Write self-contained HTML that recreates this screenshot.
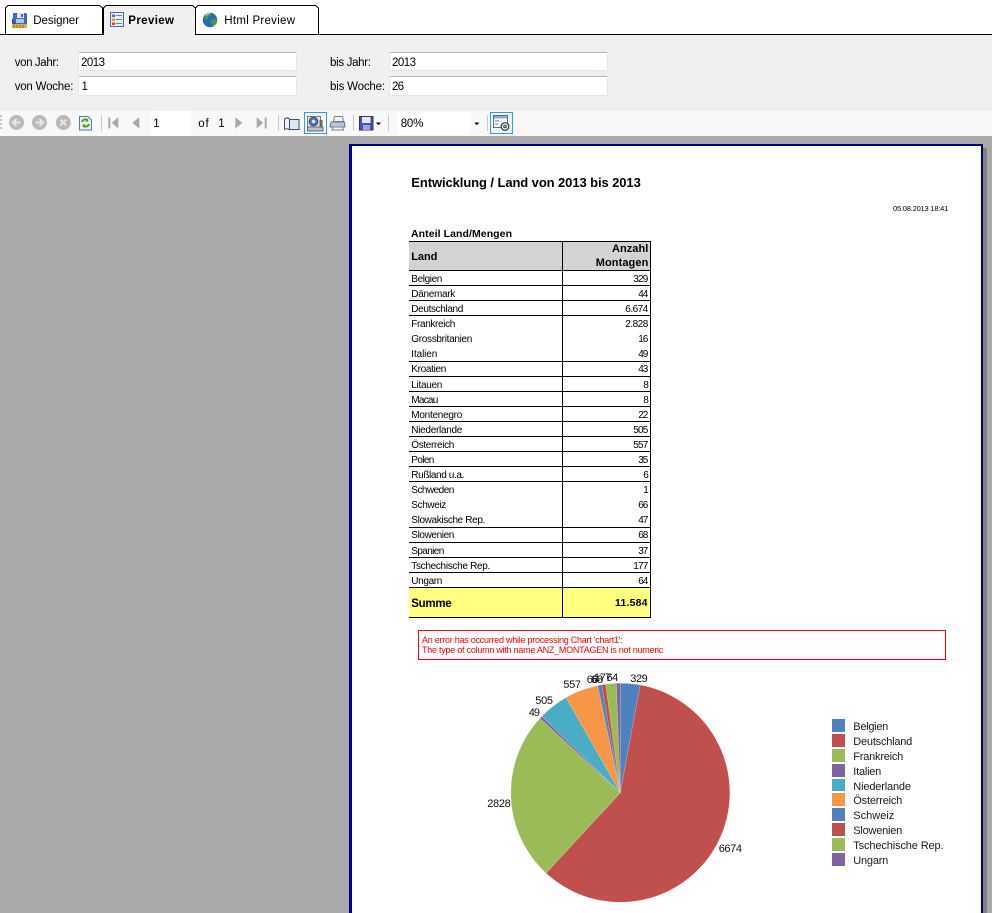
<!DOCTYPE html>
<html lang="de">
<head>
<meta charset="utf-8">
<title>Report Preview</title>
<style>
html,body{margin:0;padding:0;background:#a9a9a9;width:992px;height:913px;overflow:hidden}
svg{display:block;position:absolute;left:0;top:0}
text{font-family:"Liberation Sans",sans-serif;fill:#000;white-space:pre}
.ui{font-size:11.5px}
.c{font-size:10px}
.c text{fill:#000}
.lg{font-size:11px}
.lg text{fill:#1a1a1a}
.pl{font-size:11px}
.pl text{fill:#111}
.err{font-size:9px;fill:#f00}
.b{font-weight:bold}
.tl{fill:#000}
</style>
</head>
<body>
<svg width="992" height="913" viewBox="0 0 992 913" xmlns="http://www.w3.org/2000/svg">
<!-- backgrounds -->
<rect width="992" height="35" fill="#fff"/>
<rect y="35" width="992" height="76" fill="#f0f0f0"/>
<rect y="111" width="992" height="25" fill="#f8f8f8"/>
<rect y="136" width="992" height="777" fill="#a9a9a9"/>

<!-- tabs -->
<g fill="#fff" stroke="#000" stroke-width="1">
<path d="M5.5 34.5V8l2.5-2.5H99.5L102.5 8V34.5"/>
<path d="M195.5 34.5V8l2.5-2.5H315.5L318.5 8V34.5"/>
</g>
<rect x="0" y="34" width="992" height="1" fill="#000"/>
<path d="M103.5 35V8L106 5.5H192.5L195.5 8V35" fill="#f0f0f0" stroke="#000"/>
<rect x="104" y="34" width="91" height="2" fill="#f0f0f0"/>
<!-- designer icon -->
<path d="M13 13h13l1 1v10H13z" fill="#3b68c9"/>
<rect x="17" y="13" width="7" height="5" fill="#dbe6f6"/>
<rect x="21" y="14" width="2" height="3" fill="#3b68c9"/>
<rect x="16" y="19" width="8" height="4" fill="#a9c6ee"/>
<path d="M12 18l4 6h-4z" fill="#2a4da8"/>
<path d="M12 24h15v4H12z" fill="#dfb040"/>
<path d="M14 25v3M17 25v3M20 25v3M23 25v3" stroke="#8a6a12"/>
<text x="33.3" y="24" class="ui" textLength="45.7">Designer</text>
<!-- preview icon -->
<rect x="110.5" y="12.5" width="13" height="14" fill="#eaf0f9" stroke="#52688f"/>
<rect x="112" y="14.500" width="3" height="2.500" fill="#3a6fd8"/>
<rect x="112" y="18.500" width="3" height="2.500" fill="#e59420"/>
<rect x="112" y="22.500" width="3" height="2.500" fill="#d8402a"/>
<path d="M116 15.500h6M116 19.500h6M116 23.500h6" stroke="#6a7da0"/>
<text x="128.3" y="24" class="ui b" textLength="45.7">Preview</text>
<!-- globe -->
<circle cx="210" cy="20" r="7.2" fill="#2a69b5"/>
<path d="M204.500 15.500c2-2.300 5-3 6.500-2.500 1 1 0 3-2 3.500-1 1-1 2.500-2 3-1.700 0-3-1.500-2.500-4zM211 20c2-1 5-1.200 6.200 0 0 3-2 5.700-4.200 6.700-1-1-1-3-2-4-.5-1-.5-2 0-2.700z" fill="#3f9a4a"/>
<path d="M206 15.500a6 6 0 0 1 4-2" stroke="#cfe3f6" fill="none"/>
<text x="224.3" y="24" class="ui" textLength="70.7">Html Preview</text>

<!-- form -->
<text x="14.7" y="66" class="ui" textLength="44.3">von Jahr:</text>
<text x="14.7" y="90" class="ui" textLength="58.7">von Woche:</text>
<text x="330" y="66" class="ui" textLength="41">bis Jahr:</text>
<text x="330" y="90" class="ui" textLength="55">bis Woche:</text>
<g fill="#fff" stroke="#e2e5ec">
<rect x="78.5" y="52.5" width="218" height="18" rx="1"/>
<rect x="78.5" y="76.5" width="218" height="19" rx="1"/>
<rect x="389.5" y="52.5" width="218" height="18" rx="1"/>
<rect x="389.5" y="76.5" width="218" height="19" rx="1"/>
</g>
<g stroke="#b0b2ba">
<path d="M79 52.5h217M79 76.5h217M390 52.5h217M390 76.5h217"/>
</g>
<text x="81" y="66" class="ui" textLength="24">2013</text>
<text x="81.5" y="90" class="ui" textLength="5">1</text>
<text x="392" y="66" class="ui" textLength="24">2013</text>
<text x="392" y="90" class="ui" textLength="12">26</text>

<!-- toolbar -->
<g fill="#c4c4c4"><rect x="0" y="115" width="2" height="2"/><rect x="0" y="119" width="2" height="2"/><rect x="0" y="123" width="2" height="2"/><rect x="0" y="127" width="2" height="2"/></g>
<circle cx="16.5" cy="122.5" r="7.5" fill="#bababa"/>
<path d="M20.5 122.5h-7M16.5 119l-3.5 3.500 3.500 3.500" stroke="#e8e8e8" stroke-width="2" fill="none"/>
<circle cx="39.5" cy="122.5" r="7.5" fill="#bababa"/>
<path d="M35.5 122.5h7M39.5 119l3.500 3.500-3.500 3.500" stroke="#e8e8e8" stroke-width="2" fill="none"/>
<circle cx="63.3" cy="122.5" r="7.5" fill="#bababa"/>
<path d="M60.5 119.700l5.600 5.600M66.100 119.700l-5.600 5.600" stroke="#e8e8e8" stroke-width="2"/>
<path d="M79.5 116.500H88l3.500 3.500v10H79.500z" fill="#e6eefa" stroke="#5a79aa"/>
<path d="M82 122a3.500 3.500 0 0 1 6-1.500M89 124a3.500 3.500 0 0 1-6 1.500" stroke="#4a9a06" stroke-width="1.800" fill="none"/>
<path d="M87 118.500l1.500 3-3 .300zM84 127.500l-1.500-3 3-.300z" fill="#4a9a06"/>
<g fill="#c8c8c8"><rect x="101" y="115" width="1" height="16"/><rect x="278" y="115" width="1" height="16"/><rect x="353" y="115" width="1" height="16"/><rect x="388" y="115" width="1" height="16"/><rect x="487" y="115" width="1" height="16"/></g>
<g fill="#a8a8a8">
<rect x="108.3" y="117.500" width="2" height="11"/>
<path d="M118.300 117.300v11.200l-6.500-5.600z"/>
<path d="M139.300 117.300v11.200l-7-5.600z"/>
<path d="M235.300 117.300v11.200l7-5.600z"/>
<path d="M256.700 117.300v11.200l6.500-5.600z"/>
<rect x="264.700" y="117.500" width="2" height="11"/>
</g>
<rect x="151" y="111" width="40" height="25" fill="#fff"/>
<text x="153.3" y="127" class="ui" textLength="5.7">1</text>
<text x="198.3" y="127" class="ui" textLength="10.4">of</text>
<text x="218.3" y="127" class="ui" textLength="5.7">1</text>
<!-- book -->
<path d="M284.500 119c2-1.500 3.500-1.500 5 0v10.500c-1.500-1-3-1-5 0z" fill="#eef3fa" stroke="#3f4d66"/>
<path d="M289.500 119.500h9.500v10h-9.500z" fill="#dbe8f7" stroke="#3f4d66"/>
<!-- page setup highlighted -->
<rect x="304.5" y="112.5" width="22" height="21" fill="#f3f7fb" stroke="#3399ff"/>
<rect x="307.5" y="116.5" width="13" height="12" fill="#e4e4e4" stroke="#7a7a7a"/>
<rect x="307.5" y="127" width="15.5" height="4" fill="#c4c4c4" stroke="#666"/>
<circle cx="313.5" cy="121.500" r="4.300" fill="#4a79c0" stroke="#2f4674"/>
<circle cx="313.5" cy="121.500" r="1.800" fill="#d6e6f8"/>
<rect x="319.5" y="120" width="3" height="7" fill="#666"/>
<!-- printer -->
<path d="M334.500 116.500h8l1 5h-10z" fill="#f0f3f8" stroke="#75839a"/>
<path d="M331 122h13.500l.5 5h-15z" fill="#bcc6d4" stroke="#66758c"/>
<path d="M333 127h9.500l1 3H332z" fill="#f0f3f8" stroke="#75839a"/>
<!-- save -->
<rect x="359.5" y="116.5" width="13.5" height="13.5" fill="#4a4fb5" stroke="#2f3180"/>
<rect x="362" y="117" width="8.500" height="6" fill="#e6e9f8"/>
<rect x="363" y="125" width="7" height="5" fill="#9aa2dc"/>
<path d="M376 122.500h5l-2.500 2.700z" fill="#000"/>
<!-- zoom combo -->
<rect x="398" y="112" width="85" height="23" fill="#fff"/>
<rect x="471" y="112" width="12" height="23" fill="#f8f8f8"/>
<text x="400.7" y="127" class="ui" textLength="22.6">80%</text>
<path d="M474.3 122.500h5l-2.500 2.700z" fill="#000"/>
<!-- export highlighted -->
<rect x="490.5" y="112.5" width="22" height="21" fill="#f3f7fb" stroke="#3399ff"/>
<rect x="493.5" y="115.5" width="14" height="12" fill="#f7f9fc" stroke="#5b6b85"/>
<rect x="494" y="116" width="13" height="2.500" fill="#8aafdf"/>
<path d="M495 121h4M495 124h3" stroke="#6a7a94"/>
<circle cx="505" cy="126.500" r="3.800" fill="#eef2f8" stroke="#333" stroke-width="1.200"/>
<circle cx="505" cy="126.500" r="1.300" fill="none" stroke="#333"/>

<!-- report page -->
<rect x="983" y="148" width="4" height="765" fill="#808080"/>
<rect x="349" y="144" width="634" height="769" fill="#00008b"/>
<rect x="352" y="146" width="629" height="767" fill="#fff"/>

<text x="411.3" y="187" font-size="13" class="b" textLength="229.5">Entwicklung / Land von 2013 bis 2013</text>
<text x="893" y="211" font-size="7.5" textLength="55.3">05.08.2013 18:41</text>
<text x="411" y="237" font-size="10.5" class="b" textLength="101">Anteil Land/Mengen</text>

<!-- table -->
<rect x="409" y="241" width="242" height="29" fill="#d3d3d3"/>
<rect x="409" y="587" width="242" height="30" fill="#ffff80"/>
<g class="tl">
<rect x="409" y="241" width="242" height="1"/><rect x="409" y="270" width="242" height="1"/>
<rect x="409" y="285" width="242" height="1"/><rect x="409" y="300" width="242" height="1"/>
<rect x="409" y="315" width="242" height="1"/><rect x="409" y="361" width="242" height="1"/>
<rect x="409" y="376" width="242" height="1"/><rect x="409" y="391" width="242" height="1"/>
<rect x="409" y="406" width="242" height="1"/><rect x="409" y="421" width="242" height="1"/>
<rect x="409" y="436" width="242" height="1"/><rect x="409" y="451" width="242" height="1"/>
<rect x="409" y="466" width="242" height="1"/><rect x="409" y="481" width="242" height="1"/>
<rect x="409" y="527" width="242" height="1"/><rect x="409" y="542" width="242" height="1"/>
<rect x="409" y="557" width="242" height="1"/><rect x="409" y="572" width="242" height="1"/>
<rect x="409" y="587" width="242" height="1"/><rect x="409" y="617" width="242" height="1"/>
<rect x="562" y="241" width="1" height="377"/><rect x="650" y="241" width="1" height="377"/>
</g>
<text x="411.3" y="260" font-size="11" class="b" textLength="26">Land</text>
<text x="612" y="252" font-size="11" class="b" textLength="36.3">Anzahl</text>
<text x="595.7" y="266" font-size="11" class="b" textLength="52.6">Montagen</text>

<g class="c">
<text x="411.3" y="282" textLength="31">Belgien</text><text x="633.3" y="282" textLength="15">329</text>
<text x="411.3" y="297" textLength="44">Dänemark</text><text x="638.3" y="297" textLength="10">44</text>
<text x="411.3" y="312" textLength="52">Deutschland</text><text x="625.3" y="312" textLength="23">6.674</text>
<text x="411.3" y="327" textLength="44">Frankreich</text><text x="625.3" y="327" textLength="23">2.828</text>
<text x="411.3" y="342" textLength="61">Grossbritanien</text><text x="638.3" y="342" textLength="10">16</text>
<text x="411.3" y="357" textLength="26">Italien</text><text x="638.3" y="357" textLength="10">49</text>
<text x="411.3" y="372" textLength="35">Kroatien</text><text x="638.3" y="372" textLength="10">43</text>
<text x="411.3" y="388" textLength="31">Litauen</text><text x="643.3" y="388" textLength="5">8</text>
<text x="411.3" y="403" textLength="27">Macau</text><text x="643.3" y="403" textLength="5">8</text>
<text x="411.3" y="418" textLength="51">Montenegro</text><text x="638.3" y="418" textLength="10">22</text>
<text x="411.3" y="433" textLength="51">Niederlande</text><text x="633.3" y="433" textLength="15">505</text>
<text x="411.3" y="448" textLength="43">Österreich</text><text x="633.3" y="448" textLength="15">557</text>
<text x="411.3" y="463" textLength="23">Polen</text><text x="638.3" y="463" textLength="10">35</text>
<text x="411.3" y="478" textLength="53">Rußland u.a.</text><text x="643.3" y="478" textLength="5">6</text>
<text x="411.3" y="493" textLength="43">Schweden</text><text x="643.3" y="493" textLength="5">1</text>
<text x="411.3" y="508" textLength="35">Schweiz</text><text x="638.3" y="508" textLength="10">66</text>
<text x="411.3" y="523" textLength="74">Slowakische Rep.</text><text x="638.3" y="523" textLength="10">47</text>
<text x="411.3" y="538" textLength="43">Slowenien</text><text x="638.3" y="538" textLength="10">68</text>
<text x="411.3" y="554" textLength="33">Spanien</text><text x="638.3" y="554" textLength="10">37</text>
<text x="411.3" y="569" textLength="79">Tschechische Rep.</text><text x="633.3" y="569" textLength="15">177</text>
<text x="411.3" y="584" textLength="31">Ungarn</text><text x="638.3" y="584" textLength="10">64</text>
</g>
<text x="411.3" y="607" font-size="11.5" class="b" textLength="40.4">Summe</text>
<text x="615" y="606" font-size="10.5" class="b" textLength="32.5">11.584</text>

<!-- error box -->
<rect x="418.5" y="630.5" width="527" height="29" fill="#fff" stroke="#f00"/>
<text x="422" y="643" class="err" textLength="200.7">An error has occurred while processing Chart 'chart1':</text>
<text x="422" y="653" class="err" textLength="241.3">The type of column with name ANZ_MONTAGEN is not numeric</text>

<!-- pie -->
<g stroke="#fff" stroke-opacity=".25" stroke-width=".6">
<path d="M620.3 792.7L620.3 683.2A109.5 109.5 0 0 1 640.2 685z" fill="#4f81bd"/>
<path d="M620.3 792.7L640.2 685A109.5 109.5 0 1 1 546 873.1z" fill="#c0504d"/>
<path d="M620.3 792.7L546 873.1A109.5 109.5 0 0 1 539.9 718.4z" fill="#9bbb59"/>
<path d="M620.3 792.7L539.9 718.4A109.5 109.5 0 0 1 541.9 716.2z" fill="#8064a2"/>
<path d="M620.3 792.7L541.9 716.2A109.5 109.5 0 0 1 566.1 697.5z" fill="#4bacc6"/>
<path d="M620.3 792.7L566.1 697.5A109.5 109.5 0 0 1 597.7 685.6z" fill="#f79646"/>
<path d="M620.3 792.7L597.7 685.6A109.5 109.5 0 0 1 601.6 684.8z" fill="#4f81bd"/>
<path d="M620.3 792.7L601.6 684.8A109.5 109.5 0 0 1 605.7 684.2z" fill="#c0504d"/>
<path d="M620.3 792.7L605.7 684.2A109.5 109.5 0 0 1 616.4 683.3z" fill="#9bbb59"/>
<path d="M620.3 792.7L616.4 683.3A109.5 109.5 0 0 1 620.3 683.2z" fill="#8064a2"/>
</g>
<g class="pl">
<text x="630.3" y="682" textLength="17.4">329</text>
<text x="718.7" y="852" textLength="23.3">6674</text>
<text x="487.3" y="807" textLength="23.4">2828</text>
<text x="528.7" y="716" textLength="11.3">49</text>
<text x="535.3" y="704" textLength="17.7">505</text>
<text x="563.3" y="688" textLength="17.7">557</text>
<text x="586.7" y="683" textLength="11.6">66</text>
<text x="591" y="683" textLength="12">68</text>
<text x="594" y="681" textLength="17.5">177</text>
<text x="606.5" y="681" textLength="11.7">64</text>
</g>

<!-- legend -->
<rect x="832" y="719" width="13" height="13" fill="#4f81bd"/>
<rect x="832" y="734" width="13" height="13" fill="#c0504d"/>
<rect x="832" y="749" width="13" height="13" fill="#9bbb59"/>
<rect x="832" y="764" width="13" height="13" fill="#8064a2"/>
<rect x="832" y="779" width="13" height="12" fill="#4bacc6"/>
<rect x="832" y="793" width="13" height="13" fill="#f79646"/>
<rect x="832" y="808" width="13" height="13" fill="#4f81bd"/>
<rect x="832" y="823" width="13" height="13" fill="#c0504d"/>
<rect x="832" y="838" width="13" height="13" fill="#9bbb59"/>
<rect x="832" y="853" width="13" height="13" fill="#8064a2"/>
<g class="lg">
<text x="853.3" y="730" textLength="35">Belgien</text>
<text x="853.3" y="745" textLength="59">Deutschland</text>
<text x="853.3" y="760" textLength="50">Frankreich</text>
<text x="853.3" y="775" textLength="28">Italien</text>
<text x="853.3" y="790" textLength="57.7">Niederlande</text>
<text x="853.3" y="804" textLength="49">Österreich</text>
<text x="853.3" y="819" textLength="41">Schweiz</text>
<text x="853.3" y="834" textLength="49">Slowenien</text>
<text x="853.3" y="849" textLength="90.3">Tschechische Rep.</text>
<text x="853.3" y="864" textLength="35">Ungarn</text>
</g>
</svg>
</body>
</html>
